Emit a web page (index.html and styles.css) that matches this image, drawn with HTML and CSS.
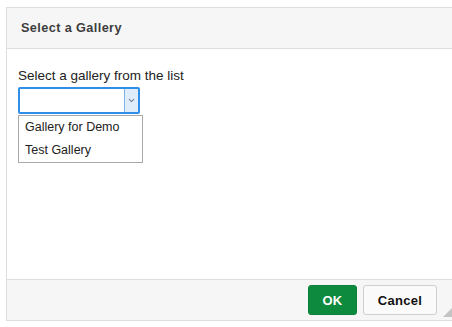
FILE: index.html
```html
<!DOCTYPE html>
<html lang="en">
<head>
    <meta charset="UTF-8">
    <title>Select a Gallery</title>
    <link rel="stylesheet" href="styles.css">
</head>
<body>

    <!-- Gallery picker dialog -->
    <div class="dialog">
        <div class="dialog-header">Select a Gallery</div>

        <div class="dialog-body">
            <label class="field-label" for="gallerySelect">Select a gallery from the list</label>
            <div class="combo">
                <div class="combo-input" id="gallerySelect"></div>
                <div class="combo-arrow">
                    <svg width="7" height="5" viewBox="0 0 7 5">
                        <path d="M1 1.2 L3.5 3.6 L6 1.2" fill="none" stroke="#6a7f94" stroke-width="1.1"/>
                    </svg>
                </div>
                <ul class="combo-list">
                    <li>Gallery for Demo</li>
                    <li>Test Gallery</li>
                </ul>
            </div>
        </div>

        <div class="dialog-footer">
            <button class="btn btn-ok">OK</button>
            <button class="btn btn-cancel">Cancel</button>
            <span class="resize-grip"></span>
        </div>
    </div>

</body>
</html>
```

FILE: styles.css
```css
* {
    margin: 0;
    padding: 0;
    box-sizing: border-box;
    font-family: "Liberation Sans", Arial, sans-serif;
}

body {
    background: #fff;
    overflow: hidden;
    height: 327px;
}

/* Dialog frame */
.dialog {
    margin: 7px 0 0 6px;
    border: 1px solid #dedede;
    border-right: none;
    background: #fff;
}

.dialog-header {
    height: 41px;
    line-height: 40px;
    padding-left: 14px;
    background: #f6f6f6;
    border-bottom: 1px solid #dedede;
    font-size: 12.7px;
    font-weight: bold;
    letter-spacing: 0.4px;
    color: #3d3d3d;
}

.dialog-body {
    height: 230px;
    padding: 18px 0 0 11px;
}

.field-label {
    display: block;
    height: 17px;
    line-height: 17px;
    font-size: 13.5px;
    color: #222;
}

/* Combo box */
.combo {
    position: relative;
    display: flex;
    width: 122px;
    height: 27px;
    margin-top: 3px;
    border: 2px solid #2f8ee8;
    border-radius: 2px;
}

.combo-input {
    flex: 1;
    background: #fff;
}

.combo-arrow {
    width: 14px;
    display: flex;
    align-items: center;
    justify-content: center;
    background: #dfecf9;
    border-left: 1px solid #7fb2e5;
}

.combo-list {
    position: absolute;
    top: 26px;
    left: -2px;
    width: 125px;
    list-style: none;
    background: #fff;
    border: 1px solid #a8a8a8;
}

.combo-list li {
    height: 23px;
    line-height: 23px;
    padding-left: 6px;
    font-size: 12.5px;
    color: #222;
}

/* Footer */
.dialog-footer {
    position: relative;
    height: 41px;
    display: flex;
    align-items: center;
    justify-content: flex-end;
    gap: 6px;
    padding-right: 15px;
    background: #f6f6f6;
    border-top: 1px solid #dedede;
}

.btn {
    height: 30px;
    border-radius: 3px;
    font-size: 13px;
    font-weight: bold;
    letter-spacing: 0.3px;
    cursor: pointer;
}

.btn-ok {
    width: 49px;
    background: #0e8a3e;
    border: 1px solid #0c7f38;
    color: #fff;
}

.btn-cancel {
    width: 74px;
    background: #fafafa;
    border: 1px solid #cfcfcf;
    color: #111;
}

.resize-grip {
    position: absolute;
    right: 0;
    bottom: 3px;
    width: 0;
    height: 0;
    border-left: 9px solid transparent;
    border-bottom: 9px solid #c4c4c4;
}
```
